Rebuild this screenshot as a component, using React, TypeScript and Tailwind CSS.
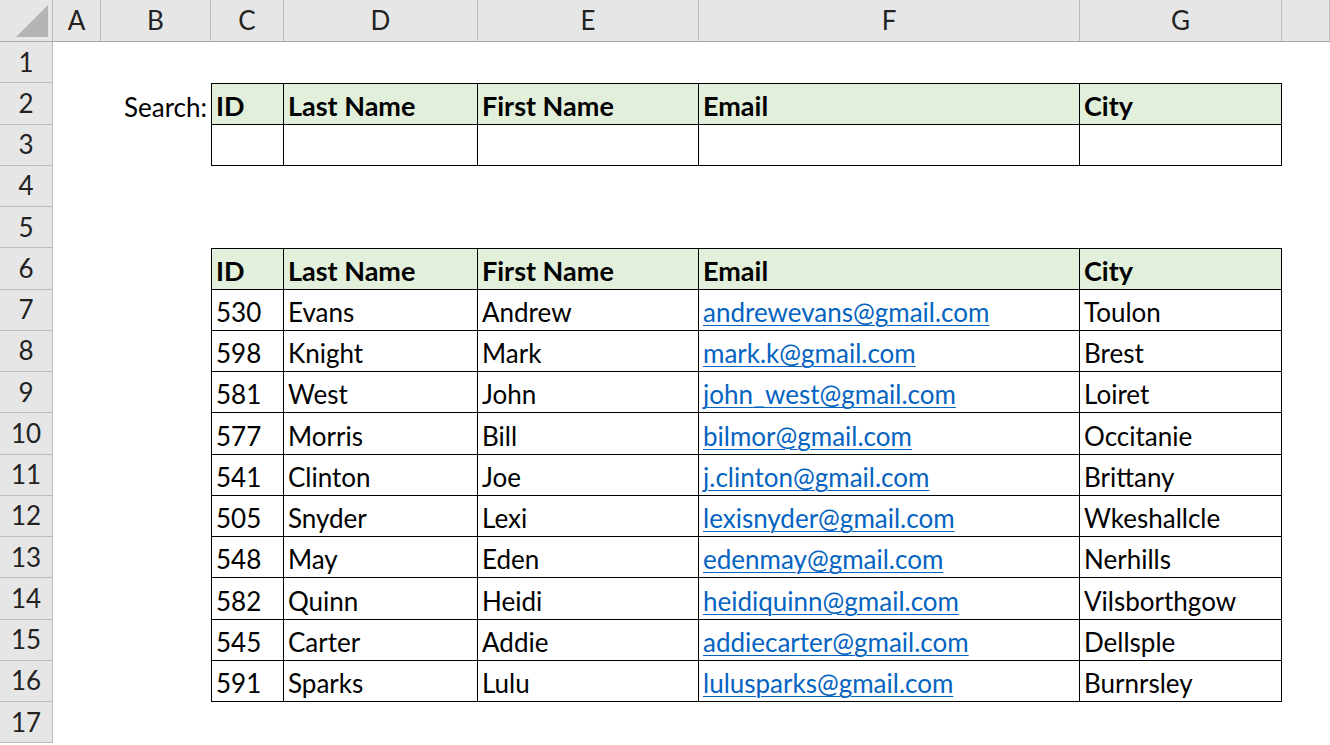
import React from "react";

const gridStyle = "grid grid-cols-[53px_48px_110px_73px_194px_221px_381px_202px_1fr]";
const letters = ["A","B","C","D","E","F","G",""];
const hdr = ["ID","Last Name","First Name","Email","City"];
const data = [
  ["530","Evans","Andrew","andrewevans@gmail.com","Toulon"],
  ["598","Knight","Mark","mark.k@gmail.com","Brest"],
  ["581","West","John","john_west@gmail.com","Loiret"],
  ["577","Morris","Bill","bilmor@gmail.com","Occitanie"],
  ["541","Clinton","Joe","j.clinton@gmail.com","Brittany"],
  ["505","Snyder","Lexi","lexisnyder@gmail.com","Wkeshallcle"],
  ["548","May","Eden","edenmay@gmail.com","Nerhills"],
  ["582","Quinn","Heidi","heidiquinn@gmail.com","Vilsborthgow"],
  ["545","Carter","Addie","addiecarter@gmail.com","Dellsple"],
  ["591","Sparks","Lulu","lulusparks@gmail.com","Burnrsley"],
];

function Row({ n, children }: { n: number; children?: React.ReactNode[] }) {
  const cells = children ?? [];
  return (
    <div className={gridStyle + " h-[41.25px]"}>
      <div className="bg-[#e6e6e6] border-r border-b border-[#bcbcbc] flex items-center justify-center text-[26px] text-[#222]">{n}</div>
      {Array.from({ length: 8 }).map((_, i) => (
        <React.Fragment key={i}>{cells[i] ?? <div />}</React.Fragment>
      ))}
    </div>
  );
}

function Cell({ text, head, first, top, link }: { text?: string; head?: boolean; first?: boolean; top?: boolean; link?: boolean }) {
  return (
    <div className={`relative border-black border-r border-b ${first ? "border-l" : ""} ${top ? "border-t" : ""} ${head ? "bg-[#e2efda] font-bold text-[27px]" : "bg-white text-[26px]"} flex items-end pl-[4px] pb-[5px] leading-none overflow-hidden whitespace-nowrap`}>
      {link ? <span className="text-[#0563c1] underline underline-offset-[3px] decoration-1">{text}</span> : text}
    </div>
  );
}

function tableRow(vals: string[], opts: { head?: boolean; top?: boolean; links?: boolean }) {
  return [
    <div />,
    <div />,
    ...vals.map((v, i) => (
      <Cell key={i} text={v} head={opts.head} top={opts.top} first={i === 0} link={opts.links && i === 3} />
    )),
  ];
}

export default function App() {
  const rows: React.ReactNode[] = [];
  for (let n = 1; n <= 17; n++) {
    let cells: React.ReactNode[] | undefined;
    if (n === 2) {
      cells = tableRow(hdr, { head: true, top: true });
      cells[1] = <div className="flex items-end justify-end pr-[4px] pb-[5px] text-[26px] leading-none whitespace-nowrap">Search:</div>;
    } else if (n === 3) cells = tableRow(["", "", "", "", ""], {});
    else if (n === 6) cells = tableRow(hdr, { head: true, top: true });
    else if (n >= 7 && n <= 16) cells = tableRow(data[n - 7], { links: true });
    rows.push(<Row key={n} n={n}>{cells}</Row>);
  }
  return (
    <div className="w-[1330px] h-[745px] overflow-hidden bg-white text-black" style={{ fontFamily: "Lato, 'Open Sans', sans-serif" }}>
      <div className={gridStyle + " h-[42px] bg-[#e6e6e6] border-b border-[#a8a8a8]"}>
        <div className="relative border-r border-[#bcbcbc]">
          <div className="absolute right-[4px] bottom-[4px] w-0 h-0 border-l-[32px] border-l-transparent border-b-[32px] border-b-[#b4b4b4]" />
        </div>
        {letters.map((l, i) => (
          <div key={i} className="border-r border-[#bcbcbc] flex items-center justify-center text-[26px] text-[#222]">{l}</div>
        ))}
      </div>
      {rows}
    </div>
  );
}
